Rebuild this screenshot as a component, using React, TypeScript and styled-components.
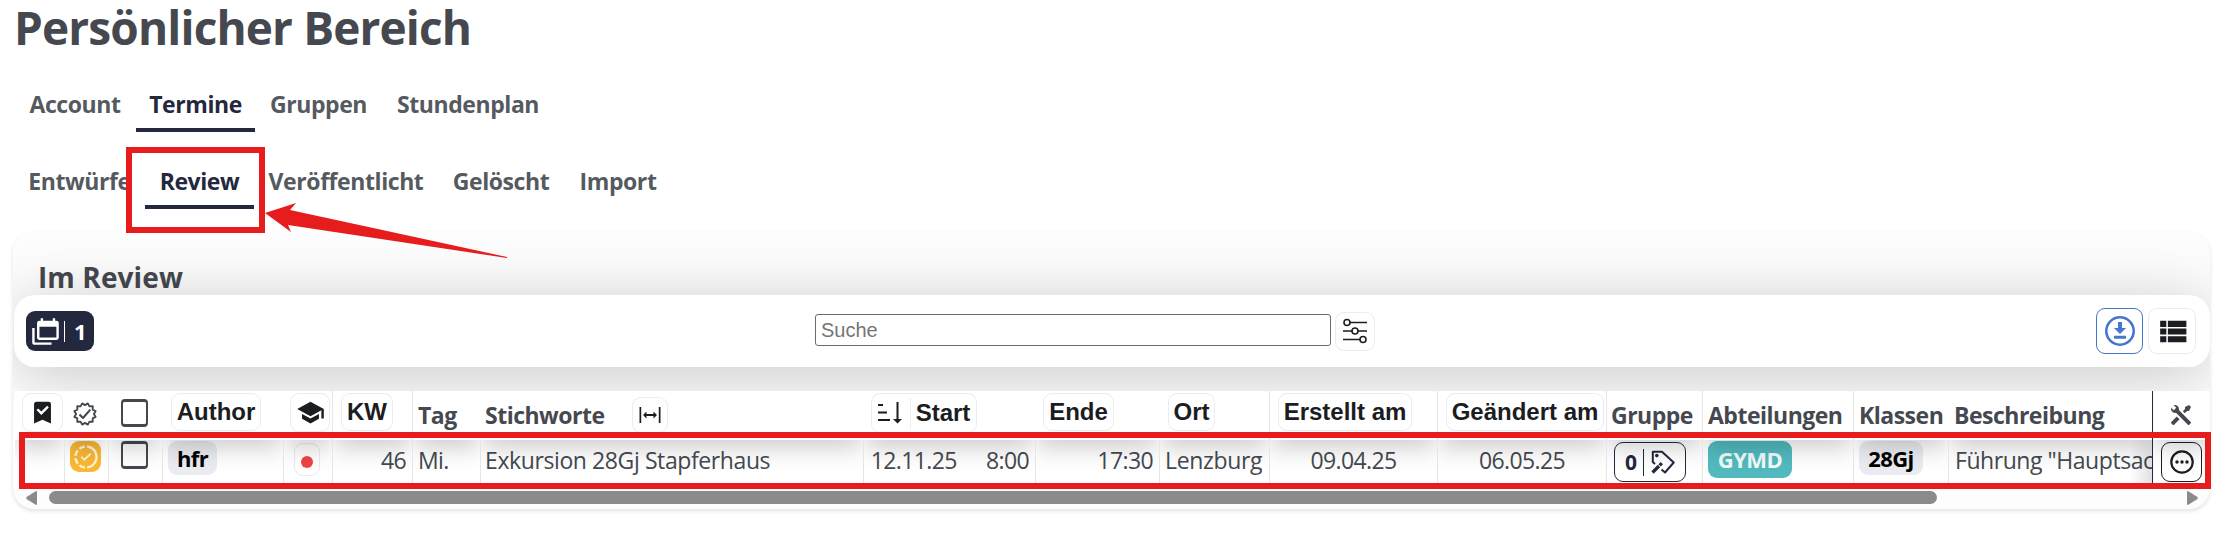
import React from 'react';
import styled, { createGlobalStyle, css } from 'styled-components';

const ink = '#45494f';
const dark = '#1b1d20';
const navy = '#23283e';
const red = '#e71c1c';
const sans = `"Open Sans", "Noto Sans", sans-serif`;
const arial = `"Liberation Sans", Arial, sans-serif`;

const Global = createGlobalStyle`
  * { box-sizing: border-box; }
  body { margin: 0; background: #fff; overflow: hidden; }
`;

const Page = styled.main`
  position: relative;
  height: 534px;
  overflow: hidden;
  padding: 0 19px 0 13px;
  background: #fff;
  color: ${ink};
  font: 400 23px/40px ${sans};
  white-space: nowrap;
`;

const Title = styled.h1`
  margin: 0 0 0 1px;
  height: 81px;
  font-size: 46px;
  font-weight: 700;
  line-height: 55px;
  letter-spacing: -0.87px;
`;

const Tabs = styled.nav`
  display: flex;
  height: 51px;
  margin-bottom: 26px;
  padding-left: 1px;
`;

const Tab = styled.a<{ $w: number; $active?: boolean }>`
  width: ${p => p.$w}px;
  text-align: center;
  font-weight: 700;
  line-height: 47px;
  letter-spacing: -0.42px;
  color: ${p => (p.$active ? navy : '#555a60')};
  border-bottom: 4px solid ${p => (p.$active ? navy : 'transparent')};
`;

const Card = styled.section`
  margin-top: -3px;
  height: 277px;
  border-radius: 21px;
  background: #fdfdfd;
  overflow: hidden;
  box-shadow: 0 2px 4px rgba(0, 0, 0, 0.12);
`;

const CardTitle = styled.h2`
  margin: 0;
  height: 63px;
  padding: 25px 0 0 25px;
  font-size: 28px;
  font-weight: 700;
  line-height: 40px;
  letter-spacing: 0.1px;
`;

const Toolbar = styled.div`
  position: relative;
  display: flex;
  align-items: center;
  justify-content: space-between;
  height: 72px;
  margin-left: 1px;
  padding: 0 14px 0 12px;
  border-radius: 21px;
  background: #fff;
  box-shadow: 0 8px 64px rgba(0, 0, 0, 0.22);
`;

const ToolbarSide = styled.div<{ $end?: boolean }>`
  display: flex;
  flex: 1;
  gap: 5px;
  justify-content: ${p => (p.$end ? 'flex-end' : 'flex-start')};
`;

const CountBadge = styled.div`
  display: flex;
  align-items: center;
  width: 68px;
  height: 40px;
  padding-left: 5px;
  border-radius: 9px;
  background: ${navy};
  color: #fff;
  font-weight: 700;
  font-size: 22px;
`;

const Divider = styled.span<{ $h: number; $gap: string; $c?: string }>`
  width: 1px;
  height: ${p => p.$h}px;
  margin: ${p => p.$gap};
  background: ${p => p.$c ?? 'currentColor'};
`;

const Search = styled.div`
  display: flex;
  align-items: center;
  gap: 4px;
  margin-right: 32px;
`;

const Input = styled.input`
  width: 516px;
  height: 32px;
  margin: 0 0 2px;
  padding: 0 5px;
  border: 1px solid #6c6c70;
  border-radius: 3px;
  background: #fff;
  font: 20px ${arial};
  &::placeholder { color: #757575; }
`;

const IconButton = styled.button<{ $w: number; $h: number; $c?: string; $line?: string; $top?: number }>`
  display: flex;
  flex: none;
  align-items: center;
  justify-content: center;
  width: ${p => p.$w}px;
  height: ${p => p.$h}px;
  margin: ${p => p.$top ?? 0}px 0 0;
  padding: 0;
  border: 1px solid ${p => p.$line ?? '#ebecee'};
  border-radius: 9px;
  background: transparent;
  color: ${p => p.$c ?? dark};
  font: 700 21px ${sans};
`;

const columns =
  '50px 44px 54px 121px 49px 80px 68px 383px 172px 124px 110px 168px 169px 96px 151px 95px 204px 1fr';

const Row = styled.div`
  display: grid;
  grid-template-columns: ${columns};
  height: 49px;
  margin-left: 1px;
  background: #fff;
`;

const HeaderRow = styled(Row)`
  margin-top: 24px;
  position: relative;
`;

const cell = css<{ $pad?: number; $line?: string }>`
  display: flex;
  align-items: flex-start;
  min-width: 0;
  padding-left: ${p => p.$pad ?? 0}px;
  border-left: 1px solid ${p => p.$line ?? 'transparent'};
`;

const Th = styled.div<{ $pad?: number; $line?: string }>`
  ${cell}
  line-height: 49px;
  font-weight: 700;
  letter-spacing: -0.5px;
`;

const Td = styled.div<{ $pad?: number; $line?: string; $right?: number; $center?: boolean; $track?: number }>`
  ${cell}
  position: relative;
  overflow: hidden;
  letter-spacing: ${p => p.$track ?? -0.6}px;
  padding-right: ${p => p.$right ?? 0}px;
  justify-content: ${p => (p.$center ? 'center' : p.$right ? 'flex-end' : 'flex-start')};
  &::before {
    content: '';
    position: absolute;
    z-index: 1;
    left: 0;
    right: 0;
    top: -49px;
    height: 49px;
    box-shadow: 0 8px 24px rgba(0, 0, 0, 0.2);
  }
`;

const SortButton = styled.button<{ $w: number; $h?: number }>`
  display: flex;
  align-items: center;
  justify-content: center;
  width: ${p => p.$w}px;
  height: ${p => p.$h ?? 38}px;
  margin: 2px 0 0;
  padding: 0;
  border: 1px solid #ebecee;
  border-radius: 9px;
  background: #fff;
  color: ${dark};
  font: 700 24px/36px ${arial};
`;

const Checkbox = styled.span<{ $top: number }>`
  width: 27px;
  height: 28px;
  margin-top: ${p => p.$top}px;
  border: 2.5px solid #44494f;
  border-width: 3px 2px;
  border-radius: 4px;
  background: #fff;
`;

const Chip = styled.span<{ $w: number; $h?: number; $bg?: string; $c?: string }>`
  width: ${p => p.$w}px;
  height: ${p => p.$h ?? 34}px;
  margin-top: 1px;
  border-radius: 9px;
  background: ${p => p.$bg ?? '#ebecf1'};
  color: ${p => p.$c ?? '#000'};
  font-weight: 700;
  font-size: 22px;
  line-height: ${p => p.$h ?? 34}px;
  text-align: center;
`;

const StateBadge = styled.span`
  display: grid;
  place-items: center;
  width: 31px;
  height: 31px;
  margin-top: 1px;
  border-radius: 9px;
  background: #fbb833;
  color: #fff6dc;
`;

const DotBox = styled.span`
  display: grid;
  place-items: center;
  width: 26px;
  height: 33px;
  margin-top: 3px;
  padding-top: 5px;
  border: 1px solid #ebebeb;
  border-radius: 9px;
  &::after {
    content: '';
    width: 12px;
    height: 12px;
    border-radius: 50%;
    background: #ef4444;
  }
`;

const Scrollbar = styled.div`
  display: flex;
  align-items: center;
  gap: 12px;
  height: 20px;
  padding: 0 12px 3px 13px;
  color: #8b8b8b;
`;

const Track = styled.div`
  flex: 1;
  height: 13px;
`;

const Thumb = styled.div`
  width: 1888px;
  height: 13px;
  border-radius: 7px;
  background: #8b8b8b;
`;

const Highlight = styled.div<{ $x: number; $y: number; $w: number; $h: number }>`
  position: absolute;
  z-index: 3;
  left: ${p => p.$x}px;
  top: ${p => p.$y}px;
  width: ${p => p.$w}px;
  height: ${p => p.$h}px;
  border: 6px solid ${red};
`;

const Arrow = styled.svg`
  position: absolute;
  z-index: 3;
  left: 265px;
  top: 203px;
`;

const FadeEdge = styled.span`
  position: absolute;
  right: 0;
  top: 0;
  width: 22px;
  height: 49px;
  background: linear-gradient(to left, rgba(0, 0, 0, 0.12), transparent);
`;

const Icon = ({ d, size }: { d: string; size: number }) => (
  <svg width={size} height={size} viewBox="0 0 24 24" fill="currentColor" fillRule="evenodd">
    <path d={d} />
  </svg>
);

const paths = {
  calendars:
    'M21,17V8H7V17H21M21,3A2,2 0 0,1 23,5V17A2,2 0 0,1 21,19H7C5.89,19 5,18.1 5,17V5A2,2 0 0,1 7,3H8V1H10V3H18V1H20V3H21M3,21H17V23H3C1.89,23 1,22.1 1,21V9H3V21Z',
  bookmark:
    'M17,3A2,2 0 0,1 19,5V21L12,18L5,21V5C5,3.89 5.9,3 7,3H17M11,14L17.25,7.76L15.84,6.34L11,11.18L8.41,8.59L7,10L11,14Z',
  school: 'M12,3L1,9L12,15L21,10.09V17H23V9M5,13.18V17.18L12,21L19,17.18V13.18L12,17L5,13.18Z',
  expand: 'M8.5,11H15.5V8.5L19,12L15.5,15.5V13H8.5V15.5L5,12L8.5,8.5V11M1.5,20V4H3.2V20H1.5M20.8,20V4H22.5V20H20.8Z',
  list: 'M9,5V9H21V5M9,19H21V15H9M9,14H21V10H9M4,9H8V5H4M4,19H8V15H4M4,14H8V10H4V14Z',
  tools:
    'M21.71 20.29L20.29 21.71A1 1 0 0 1 18.88 21.71L7 9.85A3.81 3.81 0 0 1 6 10A4 4 0 0 1 2.22 4.7L4.76 7.24L5.29 6.71L6.71 5.29L7.24 4.76L4.7 2.22A4 4 0 0 1 10 6A3.81 3.81 0 0 1 9.85 7L21.71 18.88A1 1 0 0 1 21.71 20.29M2.29 18.88A1 1 0 0 0 2.29 20.29L3.71 21.71A1 1 0 0 0 5.12 21.71L10.59 16.25L7.76 13.42M20 2L16 4V6L13.83 8.17L15.83 10.17L18 8H20L22 4Z',
  progress:
    'M13 2.03V2.05L13 4.05C17.39 4.59 20.5 8.58 19.96 12.97C19.5 16.61 16.64 19.5 13 19.93V21.93C18.5 21.38 22.5 16.5 21.95 11C21.5 6.25 17.73 2.5 13 2.03M11 2.06C9.05 2.25 7.19 3 5.67 4.26L7.1 5.74C8.22 4.84 9.57 4.26 11 4.06V2.06M4.26 5.67C3 7.19 2.25 9.04 2.05 11H4.05C4.24 9.58 4.8 8.23 5.69 7.1L4.26 5.67M15.5 8.5L10.62 13.38L8.5 11.26L7.44 12.32L10.62 15.5L16.56 9.56L15.5 8.5M2.06 13C2.26 14.96 3.03 16.81 4.27 18.33L5.69 16.9C4.81 15.77 4.24 14.42 4.06 13H2.06M7.1 18.37L5.67 19.74C7.18 21 9.04 21.79 11 22V20C9.58 19.82 8.23 19.25 7.1 18.37Z',
};

const sealPoints = Array.from({ length: 24 }, (_, i) => {
  const r = i % 2 ? 9.6 : 11.9;
  const a = ((i + 1) * Math.PI) / 12;
  return `${(13 + r * Math.sin(a)).toFixed(2)},${(13 - r * Math.cos(a)).toFixed(2)}`;
}).join(' ');

const SealIcon = () => (
  <svg width="26" height="26" viewBox="0 0 26 26" fill="none" stroke={ink} strokeLinejoin="round">
    <polygon points={sealPoints} strokeWidth="2" />
    <path d="M7 13.500l3.800 3.800 8-9" strokeWidth="2.300" />
  </svg>
);

const FilterIcon = () => (
  <svg width="24" height="26" viewBox="0 0 24 26" fill="none" stroke={dark} strokeWidth="1.6">
    <path d="M7 4.5h17M0 13h9M15 13h9M0 21.500h17" />
    <circle cx="4" cy="4.500" r="3" />
    <circle cx="12" cy="13" r="3" />
    <circle cx="20" cy="21.500" r="3" />
  </svg>
);

const DownloadIcon = () => (
  <svg width="30" height="30" viewBox="0 0 30 30" fill="none" stroke="#4577cf">
    <circle cx="15" cy="15" r="13.700" strokeWidth="2.600" />
    <path d="M13 6h4v6h4l-6 6-6-6h4z" fill="#4577cf" stroke="none" />
    <path d="M9 21.200h12" strokeWidth="3" />
  </svg>
);

const SortIcon = () => (
  <svg width="24" height="24" viewBox="0 0 24 24" fill="none" stroke={dark} strokeWidth="2">
    <path d="M0 4h5M0 11.500h9M0 19h12M19.500 1v18" />
    <path d="M15 18h9l-4.500 4.500z" fill={dark} stroke="none" />
  </svg>
);

const TagIcon = () => (
  <svg width="24" height="24" viewBox="0 0 24 24" fill="none" stroke={navy} strokeWidth="2" strokeLinejoin="round">
    <path d="M4 14L1.800 12V1.800H11L22.700 12.500 14 22.500 10.500 19.500" />
    <circle cx="5.800" cy="5.600" r="1.800" fill={navy} stroke="none" />
    <path d="M1.500 22.500L8 16" strokeWidth="3.200" />
    <path d="M8.600 15.400l2.200-2.200" strokeWidth="3.200" />
  </svg>
);

const MoreIcon = () => (
  <svg width="24" height="24" viewBox="0 0 24 24" fill={dark}>
    <circle cx="12" cy="12" r="10.700" fill="none" stroke={dark} strokeWidth="2.200" />
    <circle cx="7" cy="12" r="1.700" />
    <circle cx="12" cy="12" r="1.700" />
    <circle cx="17" cy="12" r="1.700" />
  </svg>
);

const line = '#e6e6e6';

export default function App() {
  return (
    <Page>
      <Global />
      <Title>Persönlicher Bereich</Title>
      <Tabs>
        <Tab $w={122}>Account</Tab>
        <Tab $w={119} $active>Termine</Tab>
        <Tab $w={127}>Gruppen</Tab>
        <Tab $w={172}>Stundenplan</Tab>
      </Tabs>
      <Tabs>
        <Tab $w={131}>Entwürfe</Tab>
        <Tab $w={109} $active>Review</Tab>
        <Tab $w={184}>Veröffentlicht</Tab>
        <Tab $w={126}>Gelöscht</Tab>
        <Tab $w={108}>Import</Tab>
      </Tabs>

      <Card>
        <CardTitle>Im Review</CardTitle>
        <Toolbar>
          <ToolbarSide>
            <CountBadge>
              <Icon d={paths.calendars} size={29} />
              <Divider $h={21} $gap="0 9px 0 4px" />1
            </CountBadge>
          </ToolbarSide>
          <Search>
            <Input placeholder="Suche" />
            <IconButton $w={40} $h={39}><FilterIcon /></IconButton>
          </Search>
          <ToolbarSide $end>
            <IconButton $w={47} $h={46} $line="#4577c0"><DownloadIcon /></IconButton>
            <IconButton $w={48} $h={46}><Icon d={paths.list} size={37} /></IconButton>
          </ToolbarSide>
        </Toolbar>

        <HeaderRow>
          <Th $pad={7}><SortButton $w={41} $h={39}><Icon d={paths.bookmark} size={29} /></SortButton></Th>
          <Th $pad={7}><IconButton $w={26} $h={26} $top={10} $line="transparent"><SealIcon /></IconButton></Th>
          <Th $pad={12}><Checkbox $top={8} /></Th>
          <Th $pad={8}><SortButton $w={90}>Author</SortButton></Th>
          <Th $pad={6}><SortButton $w={40} $h={39}><Icon d={paths.school} size={29} /></SortButton></Th>
          <Th $pad={8} $line={line}><SortButton $w={52}>KW</SortButton></Th>
          <Th $pad={5} $line={line}>Tag</Th>
          <Th $pad={4}>
            Stichworte
            <Divider $h={1} $gap="0 13px" $c="transparent" />
            <IconButton $w={36} $h={36} $top={6}><Icon d={paths.expand} size={24} /></IconButton>
          </Th>
          <Th $pad={7}>
            <SortButton $w={106} $h={40}><SortIcon /><Divider $h={31} $gap="0 5px 0 8px" $c="#ebecee" />Start</SortButton>
          </Th>
          <Th $pad={7}><SortButton $w={71}>Ende</SortButton></Th>
          <Th $pad={8}><SortButton $w={47}>Ort</SortButton></Th>
          <Th $pad={8} $line={line}><SortButton $w={134}>Erstellt am</SortButton></Th>
          <Th $pad={8} $line={line}><SortButton $w={158}>Geändert am</SortButton></Th>
          <Th $pad={4} $line={line}>Gruppe</Th>
          <Th $pad={5} $line={line}>Abteilungen</Th>
          <Th $pad={5} $line={line}>Klassen</Th>
          <Th $pad={5}>Beschreibung</Th>
          <Th $pad={15} $line={navy}><IconButton $w={26} $h={26} $top={11} $line="transparent" $c={ink}><Icon d={paths.tools} size={28} /></IconButton></Th>
        </HeaderRow>

        <Row>
          <Td />
          <Td $pad={5} $line={line}><StateBadge><Icon d={paths.progress} size={28} /></StateBadge></Td>
          <Td $pad={12} $line={line}><Checkbox $top={1} /></Td>
          <Td $pad={5} $line={line}><Chip $w={49}>hfr</Chip></Td>
          <Td $pad={10} $line={line}><DotBox /></Td>
          <Td $right={6} $line={line}>46</Td>
          <Td $pad={5} $line={line}>Mi.</Td>
          <Td $pad={4} $line={line} $track={-0.4}>Exkursion 28Gj Stapferhaus</Td>
          <Td $pad={6} $right={6} $line={line}>
            12.11.25
            <Divider $h={1} $gap="0 14px" $c="transparent" />
            8:00
          </Td>
          <Td $right={6} $line={line}>17:30</Td>
          <Td $pad={5} $line={line} $track={-0.35}>Lenzburg</Td>
          <Td $center $line={line}>09.04.25</Td>
          <Td $center $line={line}>06.05.25</Td>
          <Td $pad={7} $line={line}>
            <IconButton $w={72} $h={40} $top={2} $c={navy} $line={navy}>
              0<Divider $h={27} $gap="0 7px 0 6px" /><TagIcon />
            </IconButton>
          </Td>
          <Td $pad={5} $line={line}><Chip $w={84} $h={37} $bg="#52babf" $c="#f1fbfb">GYMD</Chip></Td>
          <Td $pad={5} $line={line}><Chip $w={64}>28Gj</Chip></Td>
          <Td $pad={6} $line={line} $track={-0.45}>Führung "Hauptsache<FadeEdge /></Td>
          <Td $pad={8} $line={navy}><IconButton $w={41} $h={40} $top={2} $line={dark}><MoreIcon /></IconButton></Td>
        </Row>

        <Scrollbar>
          <svg width="11" height="14" viewBox="0 0 11 14" fill="currentColor"><path d="M10 0Q11 0 11 1V13Q11 14 10 14L0.500 8Q0 7 0.500 6Z" /></svg>
          <Track><Thumb /></Track>
          <svg width="11" height="14" viewBox="0 0 11 14" fill="currentColor"><path d="M1 0Q0 0 0 1V13Q0 14 1 14L10.500 8Q11 7 10.500 6Z" /></svg>
        </Scrollbar>
      </Card>

      <Highlight $x={126} $y={147} $w={139} $h={86} />
      <Arrow width="243" height="56" viewBox="0 0 243 56" fill={red}>
        <polygon points="0,10 31,0 25,7 242,54 242,55 23,22 26,29" />
      </Arrow>
      <Highlight $x={19} $y={432} $w={2192} $h={57} />
    </Page>
  );
}
